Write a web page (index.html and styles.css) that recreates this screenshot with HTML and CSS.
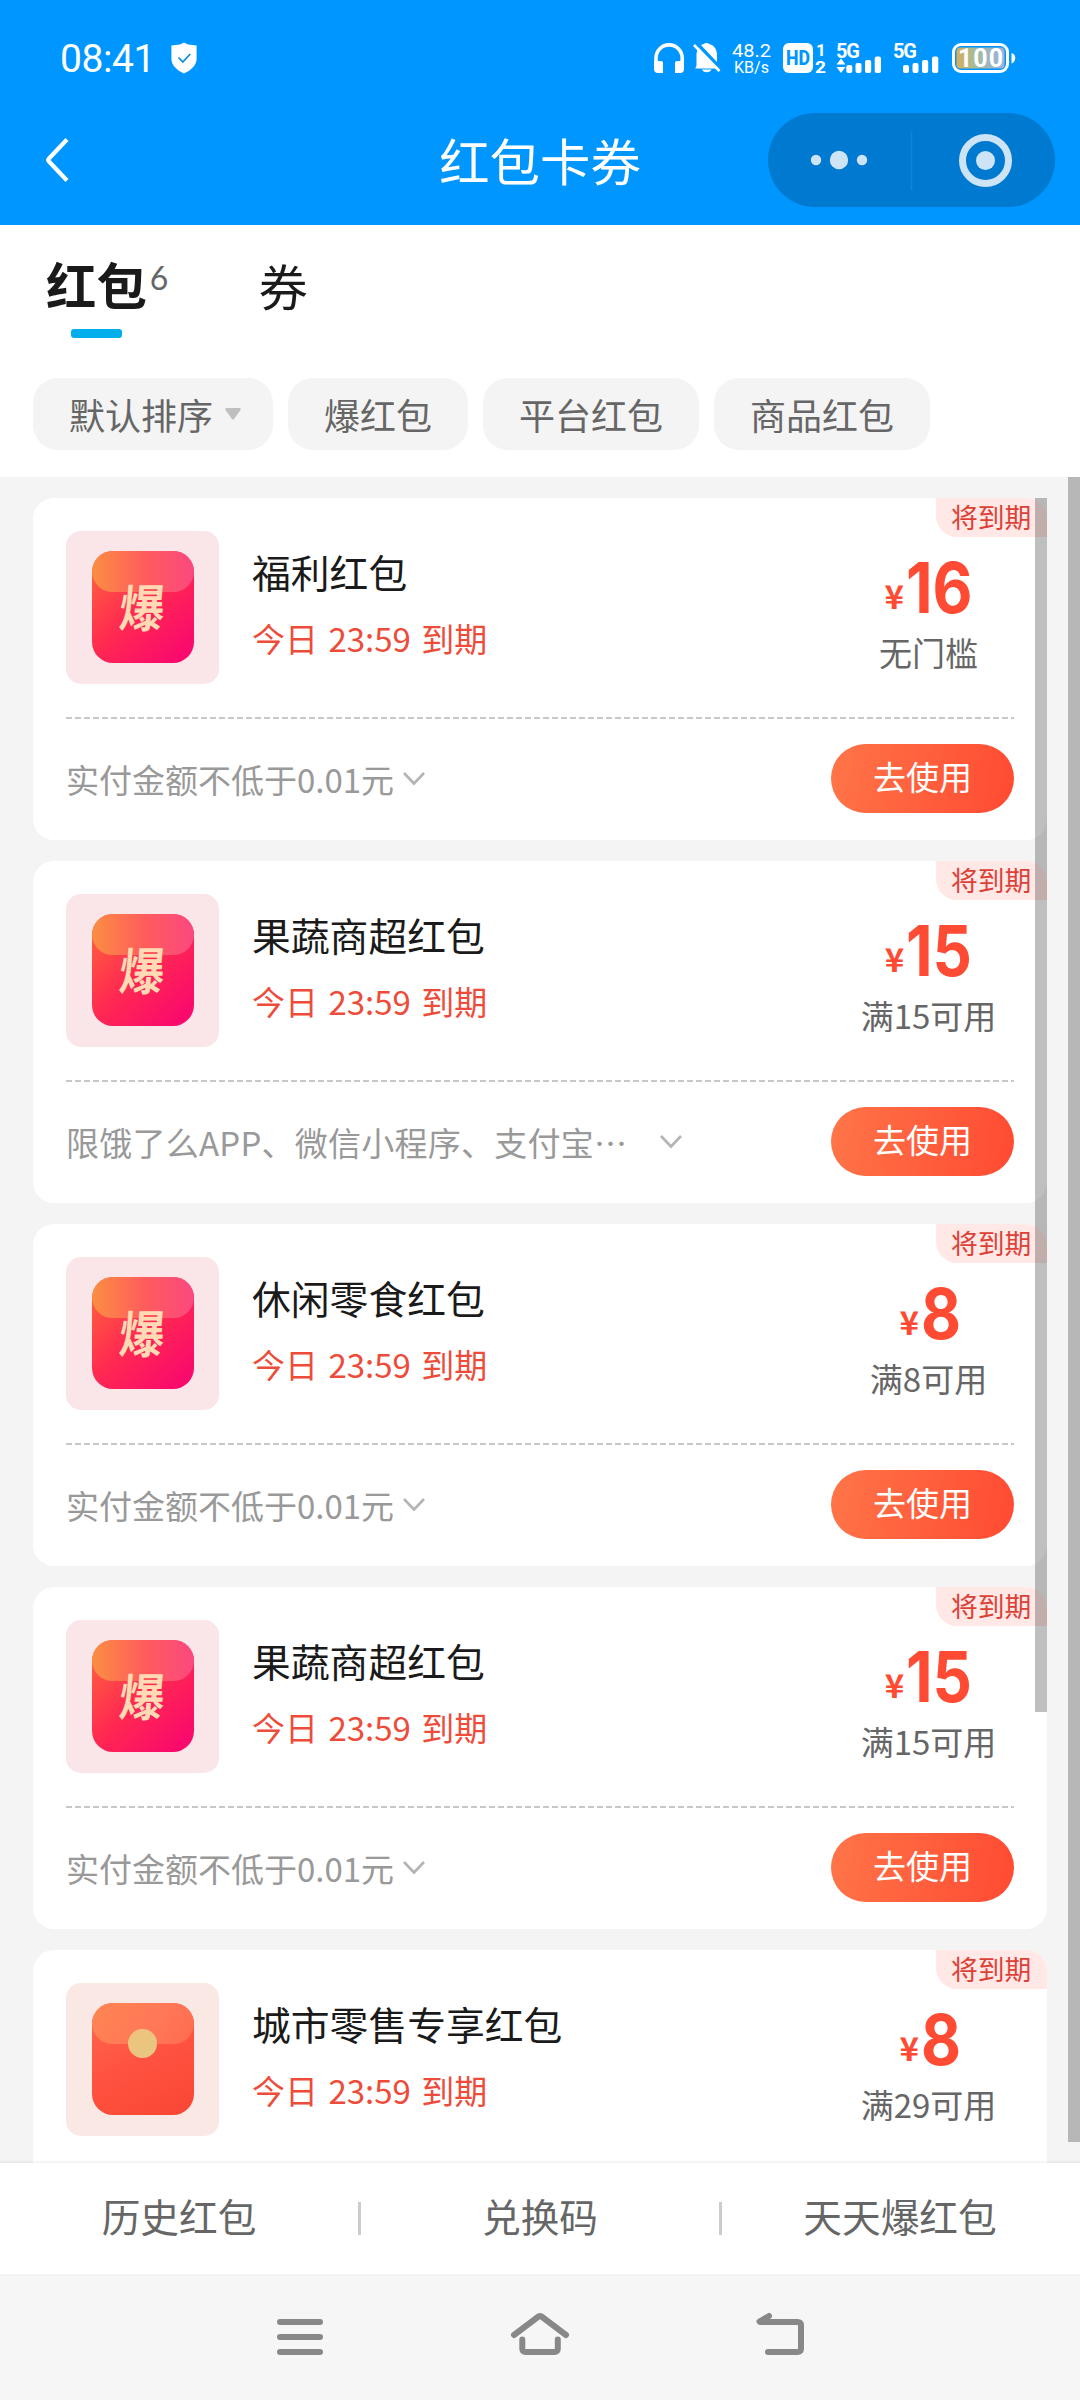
FILE: index.html
```html
<!DOCTYPE html>
<html lang="zh-CN">
<head>
<meta charset="utf-8">
<title>红包卡券</title>
<link rel="stylesheet" href="styles.css">
</head>
<body>
<div class="screen">
  <header class="header">
    <div class="status">
      <span class="clock">08:41</span>
      <svg class="shield" width="26" height="32" viewBox="0 0 26 32"><path d="M13 .5 17 2.6 25.6 3.5V17c0 6.500-6 11.500-12.600 14.500C6.400 28.500.4 23.500.4 17V3.500L9 2.600Z" fill="#fff"/><path d="m7.500 15.500 4.300 4.500 7.500-8" fill="none" stroke="#0d8fd8" stroke-width="1.800"/></svg>
      <svg class="indicators" width="366" height="42" viewBox="652 37 366 42">
        <g fill="none" stroke="#fff">
          <path d="M656 63v-5a13 13 0 0 1 26.200 0v5" stroke-width="3.600"/>
        </g>
        <path d="M654 61h7a2 2 0 0 1 2 2v10h-5a4 4 0 0 1-4-4zM684 61h-7a2 2 0 0 0-2 2v10h5a4 4 0 0 0 4-4z" fill="#fff"/>
        <path d="M696.500 66V55c0-7 4-10.500 7.500-11 1-1.300 4-1.300 5 0 5 1 8 5 8 11v8l3 3v2.500h-24.500v-1z" fill="#fff"/>
        <path d="M702 69.500h9.500a5 4 0 0 1-9.500 0z" fill="#fff"/>
        <path d="M697 43.500 722 70" stroke="#0096ff" stroke-width="3.500"/>
        <path d="M694 45 719.500 71" stroke="#fff" stroke-width="2.600"/>
        <text class="net" x="732" y="57" textLength="39" lengthAdjust="spacingAndGlyphs">48.2</text>
        <text class="net unit" x="734" y="73" textLength="35" lengthAdjust="spacingAndGlyphs">KB/s</text>
        <rect x="783" y="43" width="30" height="30" rx="6" fill="#fff"/>
        <text class="hd" x="786" y="65" textLength="24" lengthAdjust="spacingAndGlyphs">HD</text>
        <text class="sim" x="816" y="55.500">1</text>
        <text class="sim" x="815" y="72.500" textLength="11" lengthAdjust="spacingAndGlyphs">2</text>
        <text class="gen" x="836" y="57.500" textLength="24">5G</text>
        <path d="m841 58.500 4.500 6h-9zM841 73l4.500-6h-9z" fill="#fff"/>
        <g fill="#fff">
          <rect x="846.300" y="65" width="6" height="8" rx="2"/><rect x="855.500" y="63" width="6" height="10" rx="2"/><rect x="865" y="60" width="6.200" height="13" rx="2"/><rect x="874.700" y="56.500" width="6.300" height="16.500" rx="2"/>
          <rect x="903" y="65" width="6" height="8" rx="2"/><rect x="912.500" y="63" width="6" height="10" rx="2"/><rect x="922" y="60" width="6.200" height="13" rx="2"/><rect x="932" y="56.500" width="6.300" height="16.500" rx="2"/>
        </g>
        <text class="gen" x="893" y="57.500" textLength="24">5G</text>
        <defs><linearGradient id="charge"><stop offset="0" stop-color="#d9ae58"/><stop offset=".4" stop-color="#a3bd9c"/><stop offset=".7" stop-color="#9db4bd"/><stop offset="1" stop-color="#99b4e2"/></linearGradient></defs>
        <rect x="953.500" y="44.500" width="54" height="27" rx="7.500" fill="none" stroke="#fff" stroke-width="3"/>
        <rect x="956.500" y="47.500" width="48" height="21" rx="4" fill="url(#charge)"/>
        <path d="M1011.500 53c5 1 5 9 0 10.500z" fill="#fff"/>
        <text class="charge" x="958" y="66.500" textLength="45">100</text>
      </svg>
    </div>
    <div class="navbar">
      <svg class="back" width="26" height="48" viewBox="0 0 26 48"><path d="M22 3.500 4 22.500q-1.500 1.500 0 3L22 44.500" fill="none" stroke="#fff" stroke-width="4.200"/></svg>
      <h1 class="title">红包卡券</h1>
      <div class="capsule">
        <svg width="287" height="94" viewBox="0 0 287 94"><g fill="#cce4f6"><circle cx="48" cy="47" r="5.200"/><circle cx="71" cy="47" r="9.200"/><circle cx="94" cy="47" r="5.200"/><circle cx="217.500" cy="47.500" r="9.500"/></g><path d="M143.500 18v59" stroke="#0a86e2" stroke-width="1.500"/><circle cx="217.500" cy="47.500" r="23" fill="none" stroke="#cce4f6" stroke-width="7"/></svg>
      </div>
    </div>
  </header>

  <section class="filters">
    <div class="tabs">
      <div class="tab tab-active">红包<sup class="count">6</sup></div>
      <div class="tab">券</div>
    </div>
    <div class="chips">
      <span class="chip">默认排序<svg class="caret" width="16" height="12" viewBox="0 0 16 12"><path d="M1.500 0h13q2 .5 1 2L9 11q-1 1-2 0L.5 2q-1-1.500 1-2z" fill="#bfbfbf"/></svg></span>
      <span class="chip">爆红包</span>
      <span class="chip">平台红包</span>
      <span class="chip">商品红包</span>
    </div>
  </section>

  <main class="list">
    <article class="card">
      <span class="badge">将到期</span>
      <div class="top">
        <div class="thumb"><div class="gift"><span class="glyph">爆</span></div></div>
        <div class="info"><h2 class="name">福利红包</h2><p class="expire">今日 23:59 到期</p></div>
        <div class="value"><p class="price"><span class="yen">¥</span><span class="num">16</span></p><p class="rule">无门槛</p></div>
      </div>
      <div class="bottom">
        <p class="desc">实付金额不低于0.01元</p>
        <svg class="chevron" width="24" height="16" viewBox="0 0 24 16"><path d="m2 2 10 10.500L22 2" fill="none" stroke="#b4b4b4" stroke-width="2.600"/></svg>
        <a class="use">去使用</a>
      </div>
    </article>

    <article class="card">
      <span class="badge">将到期</span>
      <div class="top">
        <div class="thumb"><div class="gift"><span class="glyph">爆</span></div></div>
        <div class="info"><h2 class="name">果蔬商超红包</h2><p class="expire">今日 23:59 到期</p></div>
        <div class="value"><p class="price"><span class="yen">¥</span><span class="num">15</span></p><p class="rule">满15可用</p></div>
      </div>
      <div class="bottom">
        <p class="desc desc-long">限饿了么APP、微信小程序、支付宝⋯</p>
        <svg class="chevron" width="24" height="16" viewBox="0 0 24 16"><path d="m2 2 10 10.500L22 2" fill="none" stroke="#b4b4b4" stroke-width="2.600"/></svg>
        <a class="use">去使用</a>
      </div>
    </article>

    <article class="card">
      <span class="badge">将到期</span>
      <div class="top">
        <div class="thumb"><div class="gift"><span class="glyph">爆</span></div></div>
        <div class="info"><h2 class="name">休闲零食红包</h2><p class="expire">今日 23:59 到期</p></div>
        <div class="value"><p class="price"><span class="yen">¥</span><span class="num">8</span></p><p class="rule">满8可用</p></div>
      </div>
      <div class="bottom">
        <p class="desc">实付金额不低于0.01元</p>
        <svg class="chevron" width="24" height="16" viewBox="0 0 24 16"><path d="m2 2 10 10.500L22 2" fill="none" stroke="#b4b4b4" stroke-width="2.600"/></svg>
        <a class="use">去使用</a>
      </div>
    </article>

    <article class="card">
      <span class="badge">将到期</span>
      <div class="top">
        <div class="thumb"><div class="gift"><span class="glyph">爆</span></div></div>
        <div class="info"><h2 class="name">果蔬商超红包</h2><p class="expire">今日 23:59 到期</p></div>
        <div class="value"><p class="price"><span class="yen">¥</span><span class="num">15</span></p><p class="rule">满15可用</p></div>
      </div>
      <div class="bottom">
        <p class="desc">实付金额不低于0.01元</p>
        <svg class="chevron" width="24" height="16" viewBox="0 0 24 16"><path d="m2 2 10 10.500L22 2" fill="none" stroke="#b4b4b4" stroke-width="2.600"/></svg>
        <a class="use">去使用</a>
      </div>
    </article>

    <article class="card">
      <span class="badge">将到期</span>
      <div class="top">
        <div class="thumb thumb-plain"><div class="gift gift-plain"><span class="coin"></span></div></div>
        <div class="info"><h2 class="name">城市零售专享红包</h2><p class="expire">今日 23:59 到期</p></div>
        <div class="value"><p class="price"><span class="yen">¥</span><span class="num">8</span></p><p class="rule">满29可用</p></div>
      </div>
    </article>
    <div class="scrollbar scrollbar-inner"></div>
    <div class="scrollbar scrollbar-outer"></div>
  </main>

  <nav class="links">
    <a class="link">历史红包</a>
    <a class="link">兑换码</a>
    <a class="link">天天爆红包</a>
  </nav>

  <footer class="keys">
    <svg width="60" height="60" viewBox="270 2307 60 60"><path d="M280 2322h40M280 2337h40M280 2352h40"/></svg>
    <svg width="60" height="60" viewBox="510 2307 60 60"><path d="m514 2335 24.500-18.500q1.500-1 3 0L566 2335M522.300 2339.500v9q0 3.500 3.500 3.500h28.500q3.500 0 3.500-3.500v-9"/></svg>
    <svg width="60" height="60" viewBox="750 2307 60 60"><path d="m769 2316-9.500 5.500.5.500h37.500q3.500 0 3.500 3.500v23q0 3.500-3.500 3.500H768"/></svg>
  </footer>
</div>
</body>
</html>
```
FILE: styles.css
```css
* { box-sizing: border-box; }

body {
  margin: 0;
  font-family: "Noto Sans CJK SC", "Noto Sans", sans-serif;
  color: #1a1a1a;
  background: #f4f4f4;
}

h1, h2, p { margin: 0; font-weight: 400; }

.screen {
  width: 1080px;
  height: 2400px;
  display: flex;
  flex-direction: column;
  overflow: hidden;
}

/* Header */
.header {
  height: 225px;
  flex: none;
  background: #0096ff;
  color: #fff;
}

.status {
  height: 113px;
  display: flex;
  align-items: center;
  padding: 3px 62px 0 60px;
}

.clock {
  font: 400 39px/44px Roboto, sans-serif;
  letter-spacing: -.4px;
  width: 111px;
  padding-top: 2px;
}

.indicators { margin-left: auto; }
.indicators text { fill: #fff; font-family: Roboto, sans-serif; }
.indicators .net { font-size: 18.5px; font-weight: 400; }
.indicators .unit { font-size: 16.5px; }
.indicators .hd { fill: #0096ff; font-size: 20px; font-weight: 800; }
.indicators .sim { font-size: 17px; font-weight: 700; }
.indicators .gen { font-size: 20px; font-weight: 700; }
.indicators .charge { font-size: 25px; font-weight: 700; }

.navbar {
  height: 94px;
  display: grid;
  grid-template-columns: 312px 456px 287px;
  align-items: center;
}

.back { margin-left: 45px; }

.title {
  font-size: 50.4px;
  line-height: 90px;
  text-align: center;
}

.capsule {
  height: 94px;
  border-radius: 47px;
  background: #0079d1;
}
.capsule svg { display: block; }

/* Tabs and filters */
.filters {
  height: 252px;
  flex: none;
  background: #fff;
  padding: 24px 33px 0;
}

.tabs {
  display: flex;
  gap: 91px;
  padding-left: 13px;
  height: 129px;
}

.tab {
  font-size: 49px;
  line-height: 72px;
  height: 90px;
  display: flex;
}

.tab-active {
  font-weight: 700;
  font-size: 50.4px;
  line-height: 70px;
  position: relative;
}

.tab-active::after {
  content: "";
  position: absolute;
  left: 25px;
  top: 80px;
  width: 51px;
  height: 9px;
  border-radius: 3px;
  background: #00aeec;
}

.count {
  font: 400 32px/40px Lato, sans-serif;
  color: #666;
  margin: 9px 0 0 3px;
  width: 18px;
}

.chips { display: flex; gap: 15px; }

.chip {
  display: flex;
  align-items: center;
  height: 72px;
  padding: 0 36px 1px;
  border-radius: 25px;
  background: #f4f4f4;
  color: #666;
  font-size: 36px;
  line-height: 68px;
}

.caret { margin: 0 -4px 0 12px; }

/* Coupon list */
.list {
  height: 1686px;
  flex: none;
  position: relative;
  padding: 21px 33px 0;
  display: flex;
  flex-direction: column;
  gap: 21px;
  overflow: hidden;
}

.card {
  height: 342px;
  flex: none;
  position: relative;
  padding: 0 33px;
  border-radius: 21px;
  background: #fff;
  overflow: hidden;
}

.badge {
  position: absolute;
  top: 0;
  right: 0;
  width: 111px;
  height: 39px;
  padding-left: 15px;
  border-bottom-left-radius: 21px;
  background: #ffe8e6;
  color: #dc4136;
  font-size: 26.8px;
  line-height: 38px;
  white-space: nowrap;
}

.top {
  height: 222px;
  display: flex;
  padding-top: 33px;
  background: repeating-linear-gradient(90deg, #c8c8c8 0 6px, transparent 6px 9px) 0 219px / 100% 2px no-repeat;
}

.thumb {
  width: 153px;
  height: 153px;
  border-radius: 15px;
  background: #fae6e8;
  display: grid;
  justify-content: center;
  padding-top: 20px;
}
.thumb-plain { background: #f9e8e4; }

.gift {
  width: 102px;
  height: 112px;
  border-radius: 21px;
  display: grid;
  place-items: center;
  background:
    linear-gradient(135deg, #ff6a3c 0%, #ff2a50 48%, #fa0a6c 90%);
  position: relative;
}

.gift::before {
  content: "";
  position: absolute;
  left: 0;
  top: 0;
  width: 102px;
  height: 41px;
  border-radius: 21px;
  background: linear-gradient(90deg, #fb8e42, #ff5c5c 52%, #fb4880);
}

.gift-plain { background: linear-gradient(155deg, #ff6a50, #ff5240 50%, #fa4634); }
.gift-plain::before { background: linear-gradient(125deg, #ff8552, #ff7858 60%, #ff6a4c); }

.glyph {
  position: relative;
  color: #ffdab4;
  font-size: 49px;
  line-height: 50px;
  font-weight: 700;
  transform: translateY(-2px) skewX(-5deg) scale(.92, 1.03);
}

.coin {
  position: absolute;
  left: 36px;
  top: 26px;
  width: 29px;
  height: 29px;
  border-radius: 50%;
  background: linear-gradient(135deg, #f0c27c, #e6c882);
}

.info { margin-left: 33px; }

.name {
  font-size: 38.8px;
  line-height: 60px;
  margin-top: 10px;
}

.expire {
  font-size: 33px;
  line-height: 50px;
  margin-top: 12px;
  color: #ee4c3a;
  word-spacing: 3px;
}

.value {
  width: 171px;
  margin-left: auto;
  text-align: center;
}

.price {
  display: flex;
  justify-content: center;
  align-items: baseline;
  height: 96px;
  line-height: 98px;
  color: #ff4b33;
  font-weight: 700;
}
.yen { font-size: 33px; }
.num {
  font: 700 70px/105px Inter, sans-serif;
  transform: translateY(4px) scaleX(.88);
  transform-origin: 0 50%;
  margin: 0 -9px 0 2px;
}

.rule {
  font-size: 33px;
  line-height: 50px;
  color: #666;
}

.bottom {
  height: 120px;
  display: flex;
  align-items: center;
}

.desc {
  font-size: 33px;
  line-height: 50px;
  margin: -2px 8px 0 0;
  color: #999;
  white-space: nowrap;
}
.desc-long { width: 585px; letter-spacing: .25px; }

.chevron { flex: none; margin-top: -3px; }

.use {
  width: 183px;
  height: 69px;
  margin: -3px 0 0 auto;
  border-radius: 35px;
  background: linear-gradient(100deg, #ff7548, #ff4a32);
  color: #fff;
  font-size: 33px;
  line-height: 64px;
  text-align: center;
}

.scrollbar {
  position: absolute;
  width: 12px;
  background: rgba(0, 0, 0, .25);
}
.scrollbar-inner { left: 1035px; top: 21px; height: 1214px; }
.scrollbar-outer { left: 1068px; top: 0; height: 1665px; }

/* Bottom links */
.links {
  height: 111px;
  flex: none;
  display: grid;
  grid-template-columns: repeat(3, 360px);
  background: #fff;
  box-shadow: 0 -1px 3px rgba(0, 0, 0, .08);
  position: relative;
}

.link {
  display: flex;
  align-items: center;
  justify-content: center;
  color: #666;
  font-size: 38.7px;
  line-height: 105px;
  padding-bottom: 7px;
  position: relative;
}
.link:first-child { padding-right: 2px; }

.link + .link::before {
  content: "";
  position: absolute;
  left: -2px;
  top: 39px;
  width: 3px;
  height: 33px;
  background: #ccc;
}
.link:last-child::before { left: -1px; }

/* System keys */
.keys {
  flex: 1;
  display: flex;
  justify-content: center;
  gap: 180px;
  padding-top: 33px;
  background: #f6f6f6;
}
.keys path {
  fill: none;
  stroke: #888;
  stroke-width: 6;
  stroke-linecap: round;
  stroke-linejoin: round;
}
```
